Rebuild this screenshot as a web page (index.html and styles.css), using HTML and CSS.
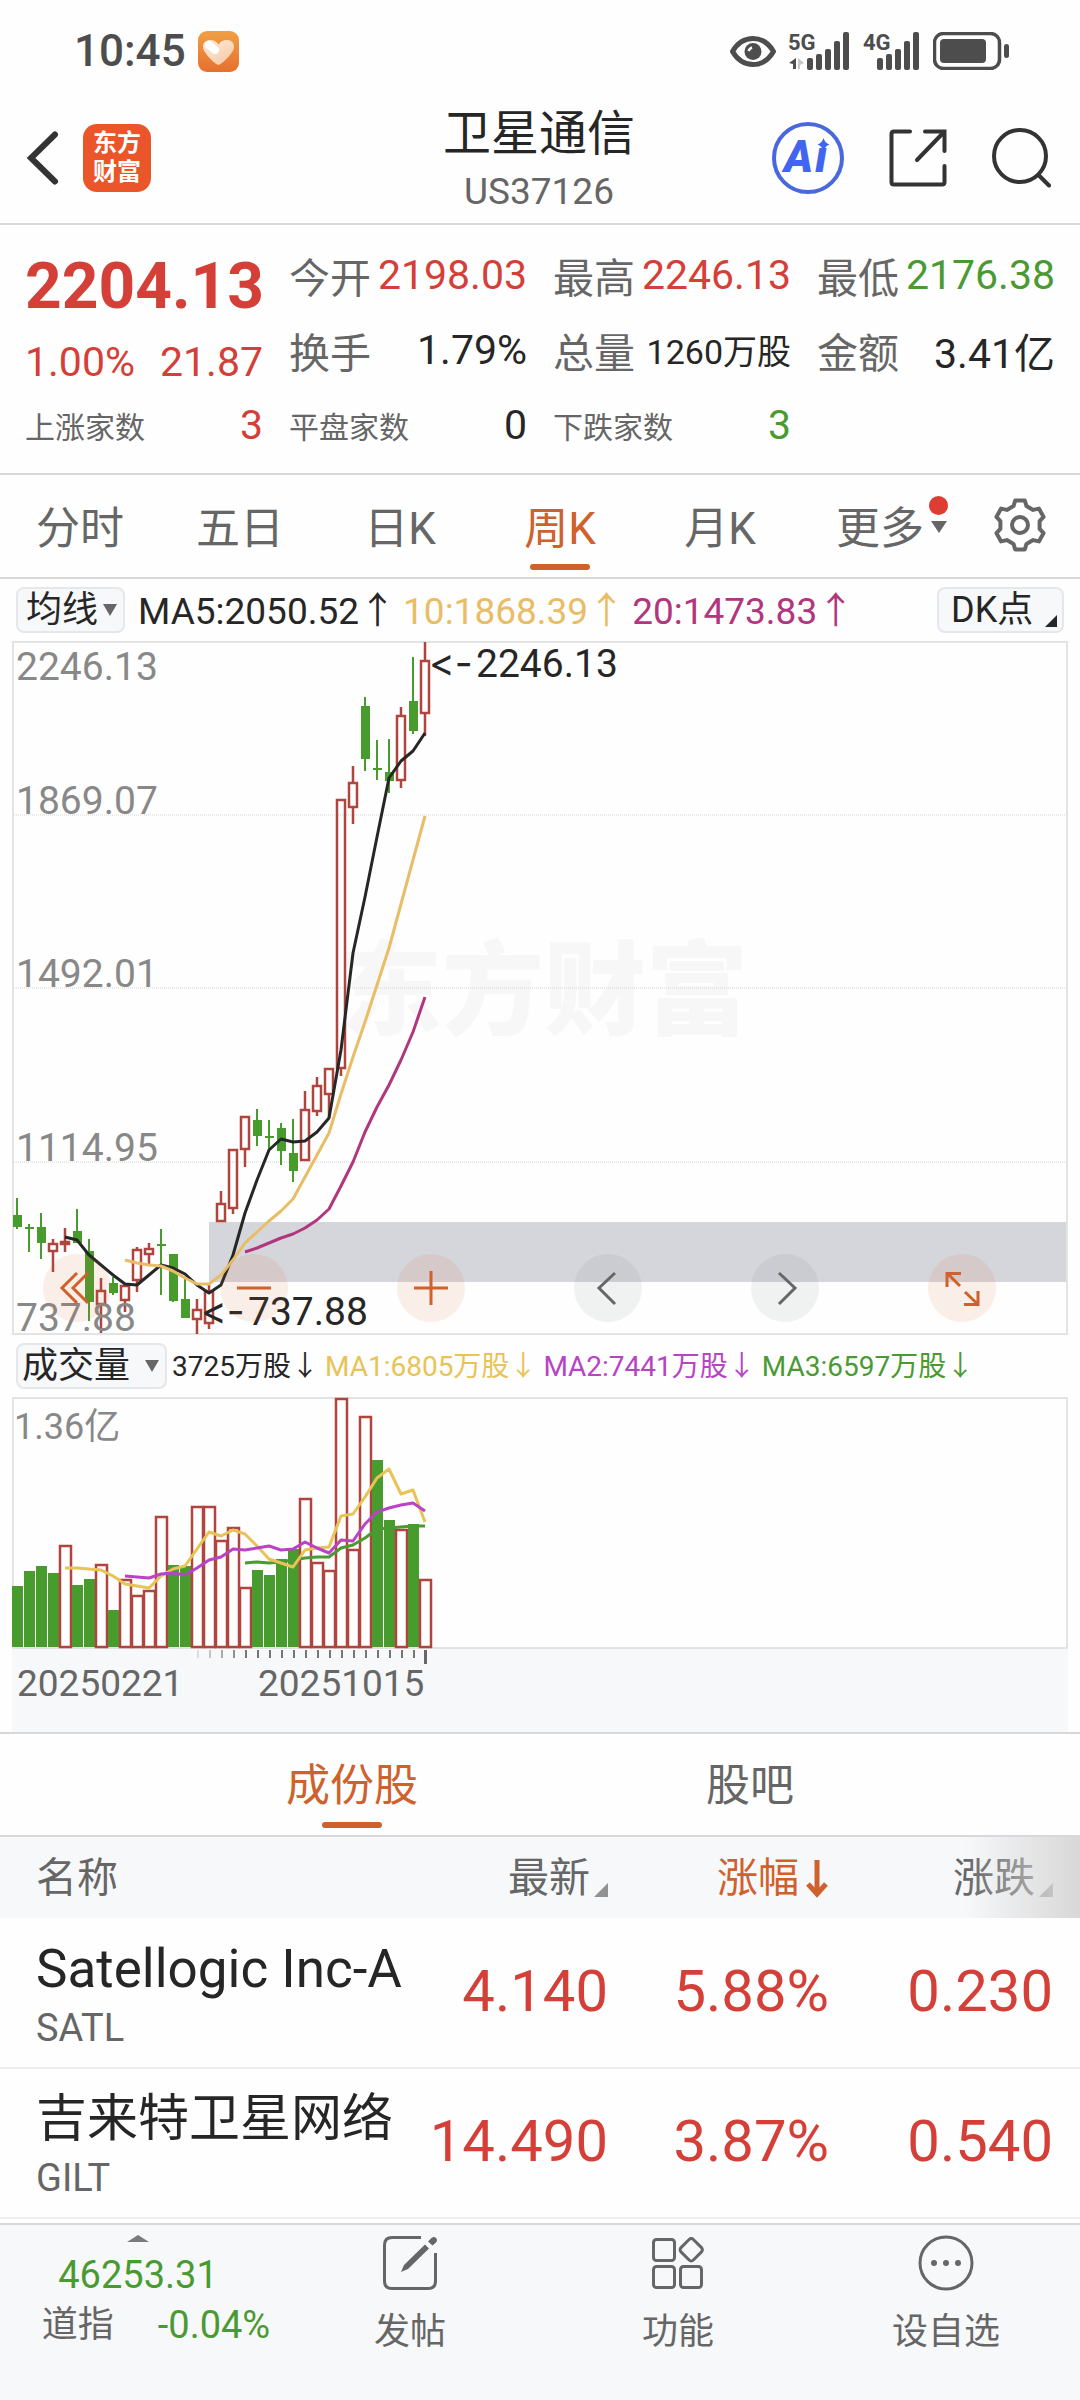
FILE: index.html
```html
<!DOCTYPE html>
<html lang="zh-CN">
<head>
  <meta charset="UTF-8">
  <meta name="viewport" content="width=device-width, initial-scale=1.0">
  <title>卫星通信 US37126</title>
  <link rel="stylesheet" href="styles.css">
</head>
<body>
  <div class="status-bar">
    <div class="status-left">
      <span class="clock">10:45</span>
      <svg class="health" viewBox="0 0 41 41">
        <defs>
          <linearGradient id="health-bg" x1="0" y1="0" x2="0" y2="1">
            <stop offset="0" stop-color="#f0a045"/>
            <stop offset="1" stop-color="#e6702f"/>
          </linearGradient>
          <linearGradient id="health-heart" x1="0" y1="0" x2="1" y2="1">
            <stop offset="0" stop-color="#fff"/>
            <stop offset="1" stop-color="#fbdcc0"/>
          </linearGradient>
        </defs>
        <rect width="41" height="41" rx="9" fill="url(#health-bg)"/>
        <path d="M20.5 34 C18 34 5 22 5 16 C5 11 8.500 9 12 9 C16 9 19 11 20.500 13.500 C22 11 25 9 29 9 C33 9 36 11.500 36 16 C36 22 23 34 20.500 34Z" fill="url(#health-heart)" opacity=".8"/>
        <path d="M11 14 L17 19" stroke="#fff" stroke-width="8" stroke-linecap="round"/>
      </svg>
    </div>
    <div class="status-right">
      <svg width="46" height="31" viewBox="0 0 46 31" fill="none" stroke="#4d4d4d">
        <path d="M2.500 15.500 C8 6 15 2.500 23 2.500 C31 2.500 38 6 43.500 15.500 C38 25 31 28.500 23 28.500 C15 28.500 8 25 2.500 15.500Z" stroke-width="5" stroke-linejoin="round"/>
        <circle cx="23" cy="15.500" r="8.500" fill="#4d4d4d" stroke="none"/>
        <path d="M18.500 15 A6 6 0 0 1 22 11.500" stroke="#fff" stroke-width="2.500"/>
      </svg>
      <svg class="signal signal-5g" width="63" height="38" viewBox="0 0 63 38">
        <text x="0" y="18">5G</text>
        <path d="M1 31 L8 26 V37 H5 V32Z"/>
        <path d="M10 26 L16 31 L12 33 V37 H10Z" opacity=".3"/>
        <rect x="19" y="26" width="6" height="12" rx="2"/>
        <rect x="28" y="22" width="6" height="16" rx="2"/>
        <rect x="37" y="17" width="6" height="21" rx="2"/>
        <rect x="46" y="9" width="6" height="29" rx="2"/>
        <rect x="55" y="0" width="6" height="38" rx="2"/>
      </svg>
      <svg class="signal" width="58" height="38" viewBox="0 0 58 38">
        <text x="0" y="18">4G</text>
        <rect x="14" y="26" width="6" height="12" rx="2"/>
        <rect x="23" y="22" width="6" height="16" rx="2"/>
        <rect x="32" y="17" width="6" height="21" rx="2"/>
        <rect x="41" y="9" width="6" height="29" rx="2"/>
        <rect x="50" y="0" width="6" height="38" rx="2"/>
      </svg>
      <svg class="battery" width="77" height="38" viewBox="0 0 77 38" fill="#4d4d4d">
        <rect x="1.500" y="1.500" width="65" height="35" rx="9" fill="none" stroke="#4d4d4d" stroke-width="3.500"/>
        <rect x="7" y="7" width="46" height="24" rx="4"/>
        <rect x="71" y="12" width="5" height="14" rx="2.500"/>
      </svg>
    </div>
  </div>

  <header class="header">
    <div class="header-left">
      <button class="icon-btn" aria-label="返回">
        <svg width="34" height="54" viewBox="0 0 34 54" fill="none" stroke="#333" stroke-width="6" stroke-linecap="round" stroke-linejoin="miter">
          <path d="M29 3.500 L5 27 L29 50.500"/>
        </svg>
      </button>
      <a class="logo" href="#" aria-label="东方财富">
        <span>东方</span>
        <span>财富</span>
      </a>
    </div>
    <div class="header-title">
      <h1>卫星通信</h1>
      <p>US37126</p>
    </div>
    <div class="header-right">
      <button class="icon-btn" aria-label="Ai">
        <svg class="ai" width="72" height="72" viewBox="0 0 72 72">
          <circle cx="36" cy="36" r="34" fill="none" stroke="#4a68dd" stroke-width="4"/>
          <text x="12" y="50">A</text>
          <text x="43" y="50">ı</text>
          <path d="M51.500 16 Q53 21 57.500 22.500 Q53 24 51.500 29 Q50 24 45.500 22.500 Q50 21 51.500 16Z"/>
        </svg>
      </button>
      <button class="icon-btn" aria-label="分享">
        <svg width="58" height="58" viewBox="0 0 58 58" fill="none" stroke="#333" stroke-width="4" stroke-linecap="round">
          <path d="M21 2.500 H5 Q2.500 2.500 2.500 5 V53 Q2.500 55.500 5 55.500 H53 Q55.500 55.500 55.500 53 V37"/>
          <path d="M36 2.500 H55.500 V22 M55 3 L28 31"/>
        </svg>
      </button>
      <button class="icon-btn" aria-label="搜索">
        <svg width="60" height="60" viewBox="0 0 60 60" fill="none" stroke="#333" stroke-width="4" stroke-linecap="round">
          <circle cx="28" cy="28" r="26"/>
          <path d="M46.500 47 L57 57.500"/>
        </svg>
      </button>
    </div>
  </header>

  <section class="quote">
    <div class="price-box">
      <div class="price">2204.13</div>
      <div class="change"><span>1.00%</span><span>21.87</span></div>
    </div>
    <div class="item"><span class="name">今开</span><span class="up">2198.03</span></div>
    <div class="item"><span class="name">最高</span><span class="up">2246.13</span></div>
    <div class="item"><span class="name">最低</span><span class="down">2176.38</span></div>
    <div class="item"><span class="name">换手</span><span>1.79%</span></div>
    <div class="item"><span class="name">总量</span><span class="small">1260万股</span></div>
    <div class="item"><span class="name">金额</span><span>3.41亿</span></div>
    <div class="item"><span class="name tiny">上涨家数</span><span class="up">3</span></div>
    <div class="item"><span class="name tiny">平盘家数</span><span>0</span></div>
    <div class="item"><span class="name tiny">下跌家数</span><span class="down">3</span></div>
  </section>

  <nav class="period-tabs">
    <button class="tab">分时</button>
    <button class="tab">五日</button>
    <button class="tab">日K</button>
    <button class="tab active">周K</button>
    <button class="tab">月K</button>
    <button class="tab more">更多<span class="dot"></span></button>
    <button class="tab settings" aria-label="设置">
      <svg width="54" height="54" viewBox="-1 -1 54 54" fill="none" stroke="#666" stroke-width="4" stroke-linejoin="round">
        <path d="M21.200 1.500 H30.800 L32.500 7.100 L39.100 10.900 L44.900 9.600 L49.600 17.900 L45.600 22.200 V29.800 L49.600 34.100 L44.900 42.400 L39.100 41.100 L32.500 44.900 L30.800 50.500 H21.200 L19.500 44.900 L12.900 41.100 L7.100 42.400 L2.400 34.100 L6.400 29.800 V22.200 L2.400 17.900 L7.100 9.600 L12.900 10.900 L19.500 7.100Z"/>
        <circle cx="26" cy="26" r="8"/>
      </svg>
    </button>
  </nav>

  <div class="indicator-row">
    <div class="picker picker-ma">
      <select aria-label="主图指标"><option>均线</option></select>
    </div>
    <div class="ma-values">
      <span class="c-black">MA5:2050.52↑</span>
      <span class="c-gold">10:1868.39↑</span>
      <span class="c-magenta">20:1473.83↑</span>
    </div>
    <div class="picker picker-dk">
      <select aria-label="DK点"><option>DK点</option></select>
    </div>
  </div>

  <div class="chart">
    <svg id="kline" viewBox="0 0 1056 694">
      <text class="watermark" x="328" y="386">东方财富</text>
      <path class="grid" d="M0 174 H1055 M0 347 H1055 M0 521 H1055"/>
      <rect class="gap-band" x="197" y="581" width="858" height="60"/>
      <path class="frame" d="M1 1 H1055 V693 H1Z"/>
      <g id="candles"></g>
      <g id="price-lines"></g>
      <g class="axis-label">
        <text x="4" y="39">2246.13</text>
        <text x="4" y="173">1869.07</text>
        <text x="4" y="346">1492.01</text>
        <text x="4" y="520">1114.95</text>
        <text x="4" y="690">737.88</text>
      </g>
      <g class="mark">
        <text class="arrow" x="417" y="36">&lt;-</text>
        <text x="464" y="36">2246.13</text>
        <text class="arrow" x="189" y="684">&lt;-</text>
        <text x="236" y="684">737.88</text>
      </g>
    </svg>
    <div class="controls">
      <button class="orange" aria-label="最早">
        <svg viewBox="0 0 68 68"><path d="M34 19 L19 34 L34 49 M45 19 L30 34 L45 49"/></svg>
      </button>
      <button class="orange" aria-label="缩小">
        <svg viewBox="0 0 68 68"><path d="M17 34 H51"/></svg>
      </button>
      <button class="orange" aria-label="放大">
        <svg viewBox="0 0 68 68"><path d="M17 34 H51 M34 17 V51"/></svg>
      </button>
      <button aria-label="向左">
        <svg viewBox="0 0 68 68"><path d="M41 19 L25 34 L41 50"/></svg>
      </button>
      <button aria-label="向右">
        <svg viewBox="0 0 68 68"><path d="M28 19 L44 34 L28 50"/></svg>
      </button>
      <button class="orange" aria-label="全屏">
        <svg viewBox="0 0 68 68"><path d="M19 33 V19.500 H33 M19.500 19.500 L32 32 M50 37 V50.500 H36 M50 50.500 L37 38"/></svg>
      </button>
    </div>
  </div>

  <div class="indicator-row">
    <div class="picker picker-vol">
      <select aria-label="副图指标"><option>成交量</option></select>
    </div>
    <div class="vol-values">
      <span class="c-black">3725万股↓</span>
      <span class="c-yellow">MA1:6805万股↓</span>
      <span class="c-purple">MA2:7441万股↓</span>
      <span class="c-green">MA3:6597万股↓</span>
    </div>
  </div>

  <div class="chart">
    <svg id="volume" viewBox="0 0 1056 335">
      <rect class="axis-bg" x="0" y="252" width="1056" height="83"/>
      <path class="frame" d="M1 1 H1055 V251 H1Z"/>
      <g id="bars"></g>
      <g id="volume-lines"></g>
      <g id="ticks"></g>
      <text class="volume-label" x="2" y="42">1.36亿</text>
      <text class="date" x="5" y="299">20250221</text>
      <text class="date" x="246" y="299">20251015</text>
    </svg>
  </div>

  <nav class="list-tabs">
    <button class="tab active">成份股</button>
    <button class="tab">股吧</button>
  </nav>

  <div class="stocks">
    <table>
      <thead>
        <tr>
          <th class="col-name">名称</th>
          <th class="col-last"><span class="sortable">最新</span></th>
          <th class="col-pct sorted">涨幅<svg width="24" height="40" viewBox="0 0 24 40" fill="none" stroke="#cf612d" stroke-width="5"><path d="M12 2 V35 M3 26 L12 36 L21 26"/></svg></th>
          <th class="col-diff"><span class="sortable">涨跌</span></th>
        </tr>
      </thead>
      <tbody>
        <tr>
          <td><div class="stock-name latin">Satellogic Inc-A</div><div class="stock-code">SATL</div></td>
          <td>4.140</td>
          <td>5.88%</td>
          <td>0.230</td>
        </tr>
        <tr>
          <td><div class="stock-name">吉来特卫星网络</div><div class="stock-code">GILT</div></td>
          <td>14.490</td>
          <td>3.87%</td>
          <td>0.540</td>
        </tr>
      </tbody>
    </table>
  </div>

  <footer class="toolbar">
    <button class="index">
      <span class="caret"></span>
      <span class="index-value">46253.31</span>
      <span class="index-line"><span>道指</span><span class="index-change">-0.04%</span></span>
    </button>
    <button class="action">
      <svg width="56" height="56" viewBox="0 0 56 56" fill="none" stroke="#666" stroke-width="3">
        <path d="M39 2.500 H10 Q2.500 2.500 2.500 10 V46 Q2.500 53.500 10 53.500 H46 Q53.500 53.500 53.500 46 V18"/>
        <path d="M19 37 L22 30 L43 9.500 L47 13.500 L26 34Z M46 6.500 L49.500 3 Q52 1 54 3 Q56 5 54 7.500 L50.500 10.500Z" fill="#666" stroke="none"/>
      </svg>
      <span>发帖</span>
    </button>
    <button class="action">
      <svg width="56" height="56" viewBox="0 0 56 56" fill="none" stroke="#666" stroke-width="3">
        <rect x="3.500" y="4.500" width="21" height="21" rx="3"/>
        <rect x="3.500" y="31.500" width="21" height="21" rx="3"/>
        <rect x="30.500" y="31.500" width="21" height="21" rx="3"/>
        <rect x="32.500" y="6" width="17.500" height="17.500" rx="3" transform="rotate(45 41.250 14.750)"/>
      </svg>
      <span>功能</span>
    </button>
    <button class="action">
      <svg width="56" height="56" viewBox="0 0 56 56" fill="none" stroke="#666" stroke-width="3">
        <circle cx="28" cy="28" r="26"/>
        <g fill="#666" stroke="none">
          <circle cx="16" cy="28" r="3"/>
          <circle cx="28" cy="28" r="3"/>
          <circle cx="40" cy="28" r="3"/>
        </g>
      </svg>
      <span>设自选</span>
    </button>
  </footer>

  <script src="chart.js"></script>
</body>
</html>
```
FILE: styles.css
```css
:root {
  --text: #262626;
  --muted: #666;
  --label: #888;
  --orange: #cf612d;
  --up: #d43f38;
  --down: #4a9a32;
  --gold: #e8bd66;
  --yellow: #e8c355;
  --magenta: #b1367d;
  --purple: #b943c6;
  --line: #d8d8da;
  --panel: #f7f8fa;
  --font-family: Roboto, "Noto Sans CJK SC", sans-serif;
}

* {
  box-sizing: border-box;
}

body {
  font-family: var(--font-family);
  background: #fefefe;
  color: var(--text);
  margin: 0;
  min-height: 100vh;
  display: flex;
  flex-direction: column;
}

svg {
  display: block;
}

button {
  font: inherit;
  color: inherit;
  background: none;
  border: none;
  padding: 0;
  cursor: pointer;
}

.up { color: var(--up); }
.down { color: var(--down); }
.c-black { color: var(--text); }
.c-gold { color: var(--gold); }
.c-magenta { color: var(--magenta); }
.c-yellow { color: var(--yellow); }
.c-purple { color: var(--purple); }
.c-green { color: var(--down); }

/* Status bar */
.status-bar {
  display: flex;
  justify-content: space-between;
  align-items: center;
  height: 102px;
  padding: 0 70px 0 74px;
}

.status-left, .status-right {
  display: flex;
  align-items: center;
  gap: 12px;
}

.clock {
  font-size: 44px;
  font-weight: 500;
  color: #4d4d4d;
}

.health {
  width: 41px;
  height: 41px;
}

.signal {
  fill: #4d4d4d;
  overflow: visible;
}

.signal text {
  font-size: 22px;
  font-weight: 700;
}

/* Header */
.header {
  display: grid;
  grid-template-columns: 1fr auto 1fr;
  align-items: center;
  height: 123px;
  padding: 0 28px 0 26px;
  border-bottom: 2px solid var(--line);
}

.header-left, .header-right {
  display: flex;
  align-items: center;
  padding-bottom: 10px;
}

.header-left {
  gap: 23px;
}

.header-right {
  justify-content: flex-end;
  gap: 45px;
}

.logo {
  display: flex;
  flex-direction: column;
  justify-content: center;
  width: 68px;
  height: 68px;
  border-radius: 14px;
  background: #ea5529;
  color: white;
  font-size: 24px;
  font-weight: 700;
  line-height: 29px;
  text-align: center;
  text-decoration: none;
}

.header-title {
  text-align: center;
}

.header-title h1 {
  margin: 0;
  font-size: 48px;
  font-weight: 400;
  line-height: 58px;
}

.header-title p {
  margin: 0;
  font-size: 37px;
  line-height: 58px;
  color: var(--muted);
}

.ai {
  fill: #4265f0;
}

.ai text {
  font-size: 44px;
  font-weight: 900;
  font-style: italic;
}

/* Quote */
.quote {
  display: grid;
  grid-template-columns: repeat(4, minmax(0, 1fr));
  grid-auto-rows: 75px;
  column-gap: 26px;
  padding: 12px 25px 11px;
  border-bottom: 2px solid var(--line);
  font-size: 41px;
}

.price-box {
  grid-row: span 2;
  padding-top: 12px;
  color: var(--up);
}

.price {
  font-size: 64px;
  font-weight: 700;
  line-height: 76px;
}

.change {
  display: flex;
  justify-content: space-between;
  line-height: 74px;
}

.item {
  display: flex;
  justify-content: space-between;
  align-items: center;
  white-space: nowrap;
}

.item .name {
  color: var(--muted);
}

.item .tiny {
  font-size: 30px;
}

.item .small {
  font-size: 34px;
}

/* Tabs */
.period-tabs, .list-tabs {
  display: flex;
  height: 104px;
  border-bottom: 2px solid var(--line);
  font-size: 44px;
  color: var(--muted);
}

.tab {
  position: relative;
  flex: 4;
  padding-bottom: 3px;
}

.tab.active {
  color: var(--orange);
}

.tab.active::after {
  content: "";
  position: absolute;
  left: 50%;
  bottom: 7px;
  width: 60px;
  height: 6px;
  margin-left: -30px;
  border-radius: 3px;
  background: var(--orange);
}

.tab.more::after {
  content: "";
  position: absolute;
  right: 13px;
  top: 46px;
  border: 8px solid transparent;
  border-top: 12px solid var(--muted);
  border-bottom: none;
}

.tab .dot {
  position: absolute;
  right: 12px;
  top: 21px;
  width: 19px;
  height: 19px;
  border-radius: 50%;
  background: #dd3d33;
}

.tab.settings {
  flex: 3;
  display: flex;
  align-items: center;
  justify-content: center;
}

/* Indicator rows */
.indicator-row {
  display: flex;
  align-items: center;
  gap: 13px;
  height: 62px;
  padding: 0 16px;
}

.picker {
  position: relative;
}

.picker select {
  appearance: none;
  display: block;
  height: 46px;
  padding: 0 24px 0 8px;
  border: 2px solid #e6e7ea;
  border-radius: 8px;
  background: var(--panel);
  color: var(--text);
  font-family: var(--font-family);
  font-size: 36px;
  line-height: 42px;
}

.picker::after {
  content: "";
  position: absolute;
  right: 8px;
  top: 17px;
  border: 7px solid transparent;
  border-top: 12px solid var(--muted);
  border-bottom: none;
  pointer-events: none;
}

.picker-dk {
  margin-left: auto;
}

.picker-dk select {
  padding: 0 28px 0 12px;
}

.picker-dk::after {
  right: 7px;
  top: 28px;
  border: none;
  border-left: 12px solid transparent;
  border-bottom: 12px solid var(--text);
}

.picker-vol select {
  padding: 0 34px 0 4px;
}

.ma-values, .vol-values {
  display: flex;
  padding-bottom: 5px;
  white-space: nowrap;
}

.ma-values {
  gap: 7px;
  font-size: 37px;
}

.vol-values {
  gap: 6px;
  font-size: 28px;
}

.picker-vol + .vol-values {
  margin-left: -8px;
}

/* Charts */
.chart {
  position: relative;
  margin: 0 12px;
}

.chart > svg {
  width: 100%;
  overflow: visible;
}

.frame {
  fill: none;
  stroke: #e3e3e4;
  stroke-width: 2;
}

.grid {
  stroke: #d4d4d4;
  stroke-dasharray: 1 1;
}

.gap-band {
  fill: #d5d6dc;
}

.watermark {
  font-size: 102px;
  font-weight: 900;
  fill: #f7f7f7;
}

.axis-label {
  font-size: 39px;
  fill: var(--label);
}

.mark {
  font-size: 39px;
  fill: var(--text);
}

/* keep "<-" as two glyphs */
.mark .arrow {
  font-family: Inter, sans-serif;
  font-variant-ligatures: none;
  font-feature-settings: "calt" 0;
}

.volume-label {
  font-size: 36px;
  fill: var(--label);
}

.date {
  font-size: 37px;
  fill: var(--muted);
}

.axis-bg {
  fill: var(--panel);
}

.line {
  fill: none;
  stroke-width: 3;
  stroke-linejoin: round;
}

.line.black { stroke: var(--text); }
.line.gold { stroke: var(--gold); }
.line.magenta { stroke: var(--magenta); }
.line.yellow { stroke: var(--yellow); }
.line.purple { stroke: var(--purple); }
.line.green { stroke: var(--down); }

.controls {
  position: absolute;
  left: 31px;
  right: 72px;
  bottom: 13px;
  display: flex;
  justify-content: space-between;
}

.controls button {
  width: 68px;
  height: 68px;
  border-radius: 50%;
  background: rgba(100, 110, 110, 0.09);
}

.controls button.orange {
  background: rgba(215, 100, 40, 0.1);
}

.controls svg {
  fill: none;
  stroke: var(--muted);
  stroke-width: 3;
}

.controls .orange svg {
  stroke: var(--orange);
}

/* Stock list */
.list-tabs {
  height: 105px;
  padding: 0 131px 0 153px;
  border-top: 2px solid var(--line);
}

.list-tabs .tab {
  padding-bottom: 5px;
}

.stocks {
  position: relative;
}

.stocks::after {
  content: "";
  position: absolute;
  top: 0;
  right: 0;
  width: 116px;
  height: 81px;
  background: linear-gradient(90deg, rgba(247, 248, 250, 0), rgba(214, 214, 214, 0.95));
}

table {
  width: 100%;
  border-collapse: collapse;
  table-layout: fixed;
}

th {
  height: 81px;
  padding: 0 0 7px;
  background: var(--panel);
  color: var(--muted);
  font-size: 41px;
  font-weight: 400;
  text-align: right;
}

.col-last {
  width: 188px;
}

.col-pct {
  width: 221px;
}

.col-diff {
  width: 251px;
}

th.col-name {
  padding-left: 36px;
  text-align: left;
}

th svg {
  display: inline-block;
  margin-left: 6px;
  vertical-align: -6px;
}

.sorted {
  color: var(--orange);
}

.sortable::after {
  content: "";
  display: inline-block;
  margin-left: 4px;
  border-left: 14px solid transparent;
  border-bottom: 14px solid #919191;
  vertical-align: -5px;
}

td {
  height: 150px;
  padding: 0 0 4px;
  border-bottom: 2px solid #ededee;
  color: var(--up);
  font-size: 58px;
  text-align: right;
}

td:first-child {
  padding: 6px 0 0 36px;
  text-align: left;
  white-space: nowrap;
}

th:last-child, td:last-child {
  padding-right: 27px;
}

.stock-name {
  font-size: 51px;
  line-height: 64px;
  color: var(--text);
}

.stock-name.latin {
  font-size: 53px;
}

.stock-code {
  font-size: 38px;
  line-height: 54px;
  color: var(--muted);
}

/* Bottom toolbar */
.toolbar {
  display: grid;
  grid-template-columns: 276fr 268fr 268fr 268fr;
  align-items: start;
  height: 177px;
  margin-top: auto;
  padding-top: 10px;
  border-top: 2px solid var(--line);
  background: var(--panel);
  color: var(--muted);
  font-size: 36px;
}

.index {
  display: flex;
  flex-direction: column;
  align-items: center;
}

.caret {
  border: 11px solid transparent;
  border-bottom: 7px solid #7b7b7b;
  border-top: none;
}

.index-value, .index-change {
  font-size: 38px;
  color: var(--down);
}

.index-value {
  line-height: 66px;
}

.index-line {
  display: flex;
  gap: 44px;
  margin-left: 36px;
  line-height: 34px;
}

.action {
  display: flex;
  flex-direction: column;
  align-items: center;
  gap: 14px;
  line-height: 54px;
}
```
FILE: chart.js
```js
const STEP = 12;
const FIRST_X = 5;
const GREEN = '#489c2e';
const RED = '#b0453f';

// direction, high, body top, body bottom, low
const candles = [
  ['d', 557, 574, 586, 588], ['d', 583, 586, 588, 611], ['d', 572, 586, 602, 618],
  ['u', 598, 603, 610, 631], ['u', 587, 601, 603, 611], ['d', 568, 590, 602, 602],
  ['d', 598, 610, 661, 680], ['u', 637, 650, 663, 692], ['d', 636, 642, 652, 654],
  ['u', 644, 645, 659, 671], ['u', 606, 609, 639, 651], ['u', 602, 608, 613, 625],
  ['d', 588, 603, 605, 654], ['d', 613, 613, 660, 661], ['d', 637, 658, 677, 677],
  ['u', 658, 669, 678, 693], ['u', 644, 651, 682, 688], ['u', 550, 563, 580, 581],
  ['u', 509, 509, 567, 573], ['u', 476, 476, 508, 526], ['d', 468, 479, 495, 505],
  ['d', 479, 495, 497, 509], ['d', 482, 487, 510, 524], ['d', 478, 512, 530, 541],
  ['u', 450, 469, 519, 519], ['u', 436, 445, 470, 475], ['u', 428, 428, 453, 476],
  ['u', 158, 159, 427, 435], ['u', 125, 142, 166, 183], ['d', 56, 65, 118, 130],
  ['d', 99, 127, 129, 139], ['d', 98, 131, 140, 152], ['u', 66, 75, 139, 147],
  ['d', 16, 60, 90, 93], ['u', 1, 20, 72, 95]
];

const priceLines = [
  { cls: 'black', start: 4, y: [596, 599, 614, 624, 634, 643, 644, 634, 624, 627, 633, 644, 652, 644, 614, 572, 539, 509, 498, 501, 500, 491, 477, 409, 312, 256, 196, 137, 120, 110, 92] },
  { cls: 'gold', start: 9, y: [619, 622, 624, 625, 630, 637, 643, 643, 634, 619, 602, 591, 580, 570, 558, 536, 514, 492, 453, 416, 381, 344, 307, 263, 219, 175] },
  { cls: 'magenta', start: 19, y: [611, 607, 602, 597, 593, 587, 579, 568, 545, 521, 491, 466, 444, 419, 391, 356] }
];

const BASE = 250;
const barDirs = 'dddduddudu' + 'uuudduuuuu' + 'dddduuuuuu' + 'ddudu';
const barTops = [
  189, 174, 169, 176, 148, 188, 182, 167, 213, 182, 198, 193, 119, 168, 169, 109, 109, 143,
  130, 190, 173, 178, 162, 152, 101, 165, 173, 1, 152, 19, 63, 123, 132, 127, 182
];

const volumeLines = [
  { cls: 'green', start: 19, y: [166, 165, 166, 165, 163, 161, 160, 160, 151, 148, 141, 132, 131, 130, 129, 129] },
  { cls: 'yellow', start: 4, y: [171, 171, 172, 173, 179, 187, 189, 191, 179, 172, 169, 152, 135, 139, 133, 137, 149, 162, 166, 170, 153, 151, 150, 119, 117, 100, 81, 72, 97, 93, 125] },
  { cls: 'purple', start: 9, y: [179, 180, 181, 177, 176, 178, 171, 163, 160, 152, 153, 151, 149, 153, 152, 145, 151, 156, 143, 144, 127, 115, 111, 108, 106, 114] }
];

function add(parentId, tag, attrs) {
  const el = document.createElementNS('http://www.w3.org/2000/svg', tag);
  for (const key in attrs) el.setAttribute(key, attrs[key]);
  document.getElementById(parentId).appendChild(el);
}

function drawLines(parentId, lines) {
  lines.forEach(line => {
    const points = line.y.map((y, i) => (FIRST_X + (line.start + i) * STEP) + ',' + y).join(' ');
    add(parentId, 'polyline', { class: 'line ' + line.cls, points: points });
  });
}

candles.forEach(([dir, high, top, bottom, low], i) => {
  const x = FIRST_X + i * STEP;
  if (dir === 'd') {
    add('candles', 'rect', { x: x - 1, y: high, width: 2, height: low - high, fill: GREEN });
    add('candles', 'rect', { x: x - 4, y: top, width: 9, height: bottom - top, fill: GREEN });
  } else {
    add('candles', 'path', { d: `M${x} ${high}V${top}M${x} ${bottom}V${low}`, stroke: RED, 'stroke-width': 2.5 });
    add('candles', 'rect', { x: x - 4, y: top, width: 8, height: bottom - top, fill: 'none', stroke: RED, 'stroke-width': 2.5 });
  }
});

barTops.forEach((top, i) => {
  const x = FIRST_X + i * STEP;
  if (barDirs[i] === 'd') {
    add('bars', 'rect', { x: x - 5, y: top, width: 11, height: BASE - top, fill: GREEN });
  } else {
    add('bars', 'rect', { x: x - 5, y: top + 1, width: 11, height: BASE - top - 1, fill: '#fefefe', stroke: RED, 'stroke-width': 2.5 });
  }
});

drawLines('price-lines', priceLines);
drawLines('volume-lines', volumeLines);

// ticks fade in from the left, the last one marks the current week
for (let i = 16; i < 35; i++) {
  add('ticks', 'rect', { x: i * STEP - 7, y: 253, width: 2, height: 8, fill: '#777', opacity: Math.min(1, (i - 15) / 5) });
}
add('ticks', 'rect', { x: 412, y: 253, width: 3, height: 14, fill: '#666' });
```
